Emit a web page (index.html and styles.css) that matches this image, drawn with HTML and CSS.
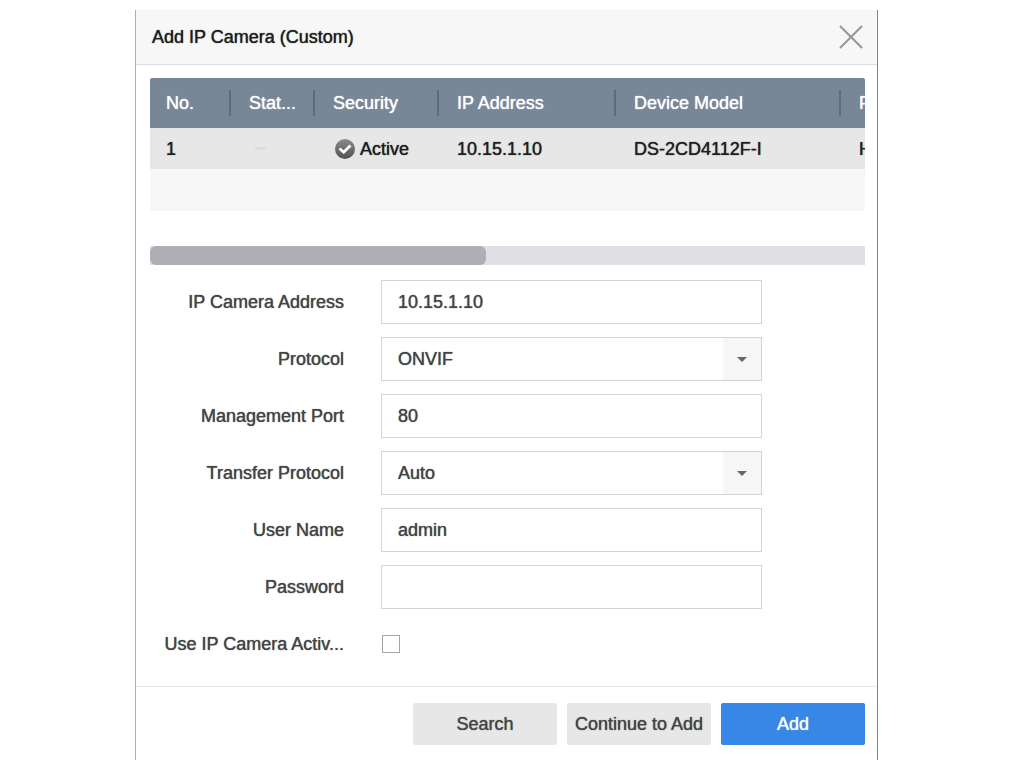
FILE: index.html
```html
<!DOCTYPE html>
<html lang="en">
<head>
  <meta charset="UTF-8" />
  <meta name="viewport" content="width=device-width, initial-scale=1" />
  <title>Add IP Camera (Custom)</title>
  <link rel="stylesheet" href="styles.css">
</head>
<body>
  <main class="dialog">
    <header class="dialog-header">
      <h1>Add IP Camera (Custom)</h1>
      <button class="close-btn" type="button" aria-label="Close">
        <svg width="24" height="26" viewBox="0 0 24 26" fill="none" stroke="#96979b" stroke-width="2">
          <path d="M1 2L23 24M23 2L1 24" />
        </svg>
      </button>
    </header>

    <div class="dialog-body">
      <div class="table-wrap">
        <table class="camera-table">
          <colgroup>
            <col class="col-no">
            <col class="col-status">
            <col class="col-security">
            <col class="col-ip">
            <col class="col-model">
            <col class="col-protocol">
          </colgroup>
          <thead>
            <tr>
              <th>No.</th>
              <th>Stat...</th>
              <th>Security</th>
              <th>IP Address</th>
              <th>Device Model</th>
              <th>Protocol</th>
            </tr>
          </thead>
          <tbody>
            <tr>
              <td>1</td>
              <td><span class="dash"></span></td>
              <td>
                <span class="security">
                  <svg width="20" height="20" viewBox="0 0 20 20">
                    <defs>
                      <linearGradient id="badge" x1="0" y1="0" x2="0" y2="1">
                        <stop offset="0" stop-color="#898c8a" />
                        <stop offset="1" stop-color="#4f5250" />
                      </linearGradient>
                    </defs>
                    <circle cx="10" cy="10" r="10" fill="url(#badge)" />
                    <path d="M4.5 9.5L8.7 13.2L15.5 6.5" fill="none" stroke="#fff" stroke-width="2.8" />
                  </svg>
                  Active
                </span>
              </td>
              <td>10.15.1.10</td>
              <td>DS-2CD4112F-I</td>
              <td>HIKVISION</td>
            </tr>
          </tbody>
        </table>
      </div>

      <div class="scrollbar"><div class="scrollbar-thumb"></div></div>

      <form class="camera-form" id="cameraForm">
        <label for="address">IP Camera Address</label>
        <input class="field" type="text" id="address" value="10.15.1.10">

        <label for="protocol">Protocol</label>
        <select class="field" id="protocol">
          <option>ONVIF</option>
        </select>

        <label for="port">Management Port</label>
        <input class="field" type="text" id="port" value="80">

        <label for="transfer">Transfer Protocol</label>
        <select class="field" id="transfer">
          <option>Auto</option>
        </select>

        <label for="user">User Name</label>
        <input class="field" type="text" id="user" value="admin">

        <label for="password">Password</label>
        <input class="field" type="password" id="password">

        <label for="activation">Use IP Camera Activ...</label>
        <div class="check-cell"><input class="checkbox" type="checkbox" id="activation"></div>
      </form>
    </div>

    <footer class="dialog-footer">
      <button class="btn" type="button">Search</button>
      <button class="btn" type="button">Continue to Add</button>
      <button class="btn btn-primary" type="submit" form="cameraForm">Add</button>
    </footer>
  </main>
</body>
</html>
```

FILE: styles.css
```css
* {
  box-sizing: border-box;
}

body {
  margin: 0;
  padding: 10px 142px 0 135px;
  background: #fff;
  color: #444;
  font-family: "Liberation Sans", Arial, sans-serif;
  font-size: 18px;
  line-height: 22px;
  text-shadow: 0 0 1px currentColor;
}

.dialog {
  min-height: calc(100vh - 10px);
  border-left: 1px solid #adadb0;
  border-right: 1px solid #87878a;
}

.dialog-header {
  display: flex;
  align-items: center;
  justify-content: space-between;
  height: 55px;
  padding: 0 14px 0 16px;
  background: #f7f7f7;
  border-bottom: 1px solid #dcdde1;
}

h1 {
  margin: 0;
  color: #1e1e1e;
  font-size: 18px;
  font-weight: normal;
}

.close-btn {
  display: flex;
  padding: 0;
  border: none;
  background: none;
  cursor: pointer;
}

.dialog-body {
  padding: 13px 12px 0 14px;
}

/* camera list */
.table-wrap {
  height: 133px;
  overflow: hidden;
  background: #f7f7f7;
  border-radius: 2px 2px 0 0;
}

.camera-table {
  width: 830px;
  table-layout: fixed;
  border-collapse: collapse;
}

.col-no { width: 81px; }
.col-status { width: 84px; }
.col-security { width: 124px; }
.col-ip { width: 177px; }
.col-model { width: 225px; }

.camera-table th,
.camera-table td {
  padding: 0 0 0 18px;
  text-align: left;
  font-weight: normal;
  white-space: nowrap;
}

.camera-table th {
  height: 50px;
  color: #fff;
  background: #788797 linear-gradient(#616b78, #616b78) right center / 2px 26px no-repeat;
}

.camera-table td {
  height: 41px;
  color: #1e1e1e;
  background: #e7e7e7;
}

.camera-table th:first-child,
.camera-table td:first-child {
  padding-left: 16px;
}

.dash {
  display: block;
  width: 12px;
  height: 3px;
  margin-left: 6px;
  background: #dcdce1;
}

.security {
  display: flex;
  align-items: center;
  gap: 5px;
  padding-left: 2px;
}

.scrollbar {
  height: 19px;
  margin-top: 35px;
  background: #e0dfe4;
}

.scrollbar-thumb {
  width: 47%;
  height: 100%;
  background: #aeafb4;
  border-radius: 6px;
}

/* form */
.camera-form {
  display: grid;
  grid-template-columns: 194px 1fr;
  grid-auto-rows: 44px;
  align-items: center;
  gap: 13px 37px;
  padding: 15px 103px 20px 0;
}

.camera-form label {
  text-align: right;
  white-space: nowrap;
}

.field {
  width: 100%;
  height: 44px;
  padding: 0 16px;
  border: 1px solid #d5d5d5;
  border-radius: 0;
  background: #fff;
  color: inherit;
  font: inherit;
  text-shadow: inherit;
}

select.field {
  appearance: none;
  background:
    url("data:image/svg+xml,%3Csvg xmlns='http://www.w3.org/2000/svg' width='10' height='5'%3E%3Cpath d='M0 0h10L5 5z' fill='%23666'/%3E%3C/svg%3E") right 14px center / 10px 5px no-repeat,
    linear-gradient(#f6f6f6, #f6f6f6) right center / 38px 100% no-repeat,
    #fff;
}

.check-cell {
  display: flex;
}

.checkbox {
  appearance: none;
  width: 18px;
  height: 18px;
  margin: 0 1px;
  border: 1px solid #a3a4ac;
  background: #fff;
}

.checkbox:checked {
  background: #3787e7;
}

.dialog-footer {
  display: flex;
  justify-content: flex-end;
  gap: 10px;
  padding: 16px 12px;
  border-top: 1px solid #e8e8ea;
}

.btn {
  width: 144px;
  height: 42px;
  padding: 0;
  border: none;
  border-radius: 2px;
  background: #e7e7e7;
  color: inherit;
  font: inherit;
  text-shadow: inherit;
  cursor: pointer;
}

.btn-primary {
  background: #3787e7;
  color: #fff;
}
```
